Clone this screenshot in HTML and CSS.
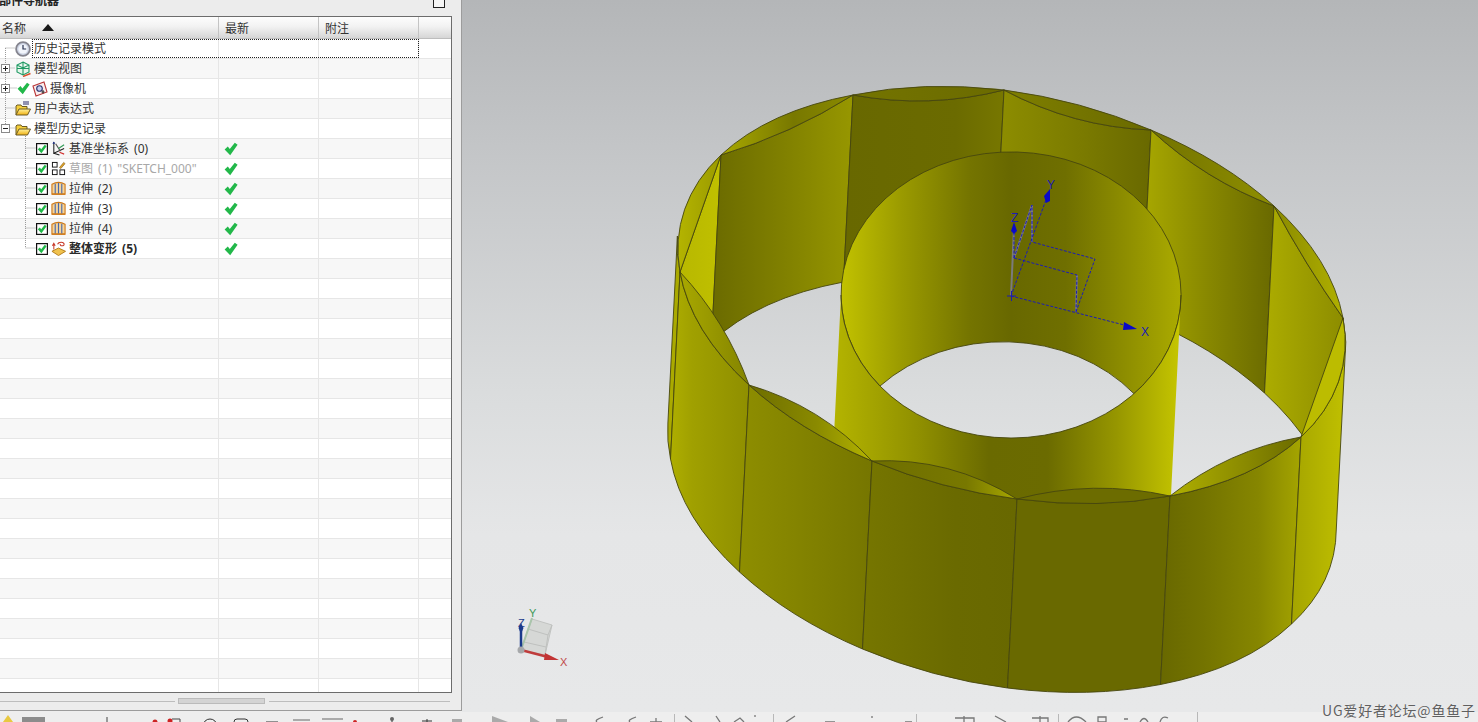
FILE: index.html
```html
<!DOCTYPE html>
<html lang="zh">
<head>
<meta charset="utf-8">
<title>部件导航器</title>
<link rel="stylesheet" href="styles.css">
</head>
<body>
<svg class="defs" width="0" height="0">
  <defs>
    <linearGradient id="fold" x1="0" y1="0" x2="0" y2="1"><stop offset="0" stop-color="#fff3a0"/><stop offset="1" stop-color="#f0b010"/></linearGradient>
    <symbol id="i-check" viewBox="0 0 14 14"><path d="M0.6 7.4 L3.8 4.4 L5.8 7 L10.8 0.8 L13.6 2.8 L6.2 13.2 Z" fill="#22b84a"/></symbol>
    <symbol id="i-box" viewBox="0 0 12 12"><rect x=".6" y=".6" width="10.8" height="10.8" fill="#fff" stroke="#111" stroke-width="1.2"/><path d="M1.8 6.2 L3.8 4.4 L5.2 6.2 L8.8 1.8 L10.6 3.2 L5.4 10.2 Z" fill="#22b84a"/></symbol>
    <symbol id="i-clock" viewBox="0 0 16 16"><circle cx="8" cy="8" r="6.9" fill="#cfd6e6" stroke="#85858f" stroke-width="1.8"/><circle cx="8" cy="8" r="4.6" fill="#f2f5fb"/><path d="M8 4 V8 H11.2" fill="none" stroke="#26304f" stroke-width="1.2"/></symbol>
    <symbol id="i-view" viewBox="0 0 16 16"><path d="M8 1 L14 4 V11 L8 14 L2 11 V4 Z M2 4 L8 7 L14 4 M8 1 V14 M2 7.5 L14 7.5" fill="#e6f6ec" stroke="#1f9a63" stroke-width="1.1"/><path d="M8 15.5 L15.5 12.5" stroke="#d8502c" stroke-width="1.5"/></symbol>
    <symbol id="i-cam" viewBox="0 0 16 16"><path d="M1 5 L12 1 L15 11 L4 15 Z" fill="#fbeeee" stroke="#b8373a" stroke-width="1.1"/><circle cx="7.5" cy="7.5" r="2.8" fill="#c8d0ee" stroke="#26306f" stroke-width="1.1"/><path d="M11 9 V12.5 M9.5 11 H12.5" stroke="#222" stroke-width="1"/></symbol>
    <symbol id="i-folder" viewBox="0 0 16 16"><path d="M1 14 V5 L2 4 H6 L7 5.5 H12 V8" fill="#f5cf3c" stroke="#6b5a24"/><path d="M1 14 L4 8 H15.5 L12.5 14 Z" fill="url(#fold)" stroke="#6b5a24"/></symbol>
    <symbol id="i-exp" viewBox="0 0 16 16"><path d="M1 14 V5 L2 4 H6 L7 5.5 H12 V8" fill="#f5cf3c" stroke="#6b5a24"/><path d="M1 14 L4 8 H15.5 L12.5 14 Z" fill="url(#fold)" stroke="#6b5a24"/><path d="M8 1 H14 M8 3 H14" stroke="#2a2a6a"/></symbol>
    <symbol id="i-datum" viewBox="0 0 16 16"><path d="M3 1 V13 L14 8 M3 13 L9 15" fill="none" stroke="#1d1d1d" stroke-width="1.1"/><path d="M5 3 L10 11" stroke="#555" stroke-width="1.2"/><path d="M8 8 L14 4" stroke="#2f9a54" stroke-width="1.1"/><path d="M9 12 L14 14" stroke="#d23030" stroke-width="1.2"/><path d="M1.5 3 L3 0.5 L4.5 3" fill="#1a2f8a"/></symbol>
    <symbol id="i-sketch" viewBox="0 0 16 16"><rect x="1.5" y="1.5" width="5" height="5" fill="#fff" stroke="#111"/><rect x="1.5" y="9.5" width="5" height="5" fill="#fff" stroke="#111"/><rect x="9.5" y="9.5" width="5" height="5" fill="#fff" stroke="#111"/><path d="M9 7 L13.5 1.5 L15 2.8 L10.5 8 Z" fill="#e0a428" stroke="#7a5410" stroke-width=".6"/></symbol>
    <symbol id="i-ext" viewBox="0 0 16 16"><path d="M1 3.5 Q8 -0.5 15 3.5 V14 H1 Z" fill="#f6d49a" stroke="#cf7a1a" stroke-width="1.2"/><path d="M4.5 3 V13.5 M8 2 V13.5 M11.5 3 V13.5" stroke="#4a68a8" stroke-width="1.2"/><path d="M1 14 H15" stroke="#cf7a1a" stroke-width="1.4"/></symbol>
    <symbol id="i-def" viewBox="0 0 16 16"><path d="M1 11 L8 7.5 L15.5 11 L8 15.5 Z" fill="#f0c24e" stroke="#b27a18"/><path d="M3 9 V3 M1.5 5 L3 2.5 L4.5 5" fill="none" stroke="#c83a2a" stroke-width="1.1"/><path d="M7 3.5 C8 0.5 14 0.5 14 3.5 C14 6 9 5.5 10 3.2" fill="none" stroke="#c83a2a" stroke-width="1.1"/></symbol>
  </defs>
</svg>

<main class="main">
  <section class="panel">
    <header class="panel-title">
      <span class="title-text">部件导航器</span>
      <span class="title-box"></span>
    </header>
    <div class="table">
      <div class="row head">
        <div class="cell name"><span class="head-name">名称</span><span class="sort"></span></div>
        <div class="cell col">最新</div>
        <div class="cell col">附注</div>
        <div class="cell rest"></div>
      </div>
      <div class="rows">
        <div class="row"><div class="cell name l0"><svg class="ic"><use href="#i-clock"/></svg><span>历史记录模式</span></div><div class="cell col"></div><div class="cell col"></div><div class="cell rest"></div></div>
        <div class="row"><div class="cell name l0"><svg class="ic"><use href="#i-view"/></svg><span>模型视图</span></div><div class="cell col"></div><div class="cell col"></div><div class="cell rest"></div></div>
        <div class="row"><div class="cell name lc"><svg class="tick"><use href="#i-check"/></svg><svg class="ic"><use href="#i-cam"/></svg><span>摄像机</span></div><div class="cell col"></div><div class="cell col"></div><div class="cell rest"></div></div>
        <div class="row"><div class="cell name l0"><svg class="ic"><use href="#i-exp"/></svg><span>用户表达式</span></div><div class="cell col"></div><div class="cell col"></div><div class="cell rest"></div></div>
        <div class="row"><div class="cell name l0"><svg class="ic"><use href="#i-folder"/></svg><span>模型历史记录</span></div><div class="cell col"></div><div class="cell col"></div><div class="cell rest"></div></div>
        <div class="row"><div class="cell name l1"><svg class="cb"><use href="#i-box"/></svg><svg class="ic15"><use href="#i-datum"/></svg><span>基准坐标系 (0)</span></div><div class="cell col"><svg class="ok"><use href="#i-check"/></svg></div><div class="cell col"></div><div class="cell rest"></div></div>
        <div class="row"><div class="cell name l1 dim"><svg class="cb"><use href="#i-box"/></svg><svg class="ic15"><use href="#i-sketch"/></svg><span>草图 (1) "SKETCH_000"</span></div><div class="cell col"><svg class="ok"><use href="#i-check"/></svg></div><div class="cell col"></div><div class="cell rest"></div></div>
        <div class="row"><div class="cell name l1"><svg class="cb"><use href="#i-box"/></svg><svg class="ic15"><use href="#i-ext"/></svg><span>拉伸 (2)</span></div><div class="cell col"><svg class="ok"><use href="#i-check"/></svg></div><div class="cell col"></div><div class="cell rest"></div></div>
        <div class="row"><div class="cell name l1"><svg class="cb"><use href="#i-box"/></svg><svg class="ic15"><use href="#i-ext"/></svg><span>拉伸 (3)</span></div><div class="cell col"><svg class="ok"><use href="#i-check"/></svg></div><div class="cell col"></div><div class="cell rest"></div></div>
        <div class="row"><div class="cell name l1"><svg class="cb"><use href="#i-box"/></svg><svg class="ic15"><use href="#i-ext"/></svg><span>拉伸 (4)</span></div><div class="cell col"><svg class="ok"><use href="#i-check"/></svg></div><div class="cell col"></div><div class="cell rest"></div></div>
        <div class="row"><div class="cell name l1 strong"><svg class="cb"><use href="#i-box"/></svg><svg class="ic15"><use href="#i-def"/></svg><span>整体变形 (5)</span></div><div class="cell col"><svg class="ok"><use href="#i-check"/></svg></div><div class="cell col"></div><div class="cell rest"></div></div>
        <div class="row"><div class="cell name"></div><div class="cell col"></div><div class="cell col"></div><div class="cell rest"></div></div>
        <div class="row"><div class="cell name"></div><div class="cell col"></div><div class="cell col"></div><div class="cell rest"></div></div>
        <div class="row"><div class="cell name"></div><div class="cell col"></div><div class="cell col"></div><div class="cell rest"></div></div>
        <div class="row"><div class="cell name"></div><div class="cell col"></div><div class="cell col"></div><div class="cell rest"></div></div>
        <div class="row"><div class="cell name"></div><div class="cell col"></div><div class="cell col"></div><div class="cell rest"></div></div>
        <div class="row"><div class="cell name"></div><div class="cell col"></div><div class="cell col"></div><div class="cell rest"></div></div>
        <div class="row"><div class="cell name"></div><div class="cell col"></div><div class="cell col"></div><div class="cell rest"></div></div>
        <div class="row"><div class="cell name"></div><div class="cell col"></div><div class="cell col"></div><div class="cell rest"></div></div>
        <div class="row"><div class="cell name"></div><div class="cell col"></div><div class="cell col"></div><div class="cell rest"></div></div>
        <div class="row"><div class="cell name"></div><div class="cell col"></div><div class="cell col"></div><div class="cell rest"></div></div>
        <div class="row"><div class="cell name"></div><div class="cell col"></div><div class="cell col"></div><div class="cell rest"></div></div>
        <div class="row"><div class="cell name"></div><div class="cell col"></div><div class="cell col"></div><div class="cell rest"></div></div>
        <div class="row"><div class="cell name"></div><div class="cell col"></div><div class="cell col"></div><div class="cell rest"></div></div>
        <div class="row"><div class="cell name"></div><div class="cell col"></div><div class="cell col"></div><div class="cell rest"></div></div>
        <div class="row"><div class="cell name"></div><div class="cell col"></div><div class="cell col"></div><div class="cell rest"></div></div>
        <div class="row"><div class="cell name"></div><div class="cell col"></div><div class="cell col"></div><div class="cell rest"></div></div>
        <div class="row"><div class="cell name"></div><div class="cell col"></div><div class="cell col"></div><div class="cell rest"></div></div>
        <div class="row"><div class="cell name"></div><div class="cell col"></div><div class="cell col"></div><div class="cell rest"></div></div>
        <div class="row"><div class="cell name"></div><div class="cell col"></div><div class="cell col"></div><div class="cell rest"></div></div>
        <div class="row"><div class="cell name"></div><div class="cell col"></div><div class="cell col"></div><div class="cell rest"></div></div>
        <div class="row"><div class="cell name"></div><div class="cell col"></div><div class="cell col"></div><div class="cell rest"></div></div>
        <div class="row"><div class="cell name"></div><div class="cell col"></div><div class="cell col"></div><div class="cell rest"></div></div>
      </div>
      <div class="focus"></div>
      <svg class="tree" viewBox="0 17 60 240" width="60" height="240">
        <g class="dots">
          <path d="M5.5 48 V64 M5.5 73 V84 M5.5 93 V124 M5.5 48 H15 M9.5 68 H15 M9.5 88 H17 M5.5 108 H15 M9.5 128 H15"/>
          <path d="M25.5 136 V248 M25.5 148 H36 M25.5 168 H36 M25.5 188 H36 M25.5 208 H36 M25.5 228 H36 M25.5 248 H36"/>
        </g>
        <g class="plus">
          <rect x="1.5" y="64.5" width="8" height="8"/><path d="M3 68.5 H8 M5.5 66 V71"/>
          <rect x="1.5" y="84.5" width="8" height="8"/><path d="M3 88.5 H8 M5.5 86 V91"/>
          <rect x="1.5" y="124.5" width="8" height="8"/><path d="M3 128.5 H8"/>
        </g>
      </svg>
    </div>
    <div class="hscroll"><span class="track t1"></span><span class="thumb"></span><span class="track t2"></span></div>
  </section>

  <section class="view">
    <svg class="scene" viewBox="462 0 1016 712" width="1016" height="712">
      <defs>
        <linearGradient id="gLA" gradientUnits="userSpaceOnUse" x1="713" y1="0" x2="853" y2="0"><stop offset="0" stop-color="#6b6b00"/><stop offset=".55" stop-color="#828200"/><stop offset="1" stop-color="#979700"/></linearGradient>
        <linearGradient id="gAB" gradientUnits="userSpaceOnUse" x1="845" y1="0" x2="1004" y2="0"><stop offset="0" stop-color="#686800"/><stop offset=".7" stop-color="#6b6b00"/><stop offset="1" stop-color="#777700"/></linearGradient>
        <linearGradient id="gBC" gradientUnits="userSpaceOnUse" x1="1004" y1="0" x2="1150" y2="0"><stop offset="0" stop-color="#8c8c00"/><stop offset=".55" stop-color="#7a7a00"/><stop offset="1" stop-color="#696900"/></linearGradient>
        <linearGradient id="gCD" gradientUnits="userSpaceOnUse" x1="1147" y1="0" x2="1272" y2="0"><stop offset="0" stop-color="#a6a600"/><stop offset=".5" stop-color="#878700"/><stop offset="1" stop-color="#6a6a00"/></linearGradient>
        <linearGradient id="gDE" gradientUnits="userSpaceOnUse" x1="1265" y1="0" x2="1343" y2="0"><stop offset="0" stop-color="#acac00"/><stop offset="1" stop-color="#8d8d00"/></linearGradient>
        <linearGradient id="gKLin" gradientUnits="userSpaceOnUse" x1="680" y1="0" x2="722" y2="0"><stop offset="0" stop-color="#b8b800"/><stop offset="1" stop-color="#c0c000"/></linearGradient>
        <linearGradient id="gFar" gradientUnits="userSpaceOnUse" x1="841" y1="0" x2="1181" y2="0"><stop offset="0" stop-color="#c2c200"/><stop offset=".18" stop-color="#9a9a00"/><stop offset=".38" stop-color="#747400"/><stop offset=".5" stop-color="#686800"/><stop offset=".66" stop-color="#6f6f00"/><stop offset=".85" stop-color="#909000"/><stop offset="1" stop-color="#abab00"/></linearGradient>
        <linearGradient id="gNear" gradientUnits="userSpaceOnUse" x1="834" y1="0" x2="1178" y2="0"><stop offset="0" stop-color="#b4b400"/><stop offset=".25" stop-color="#8f8f00"/><stop offset=".45" stop-color="#6a6a00"/><stop offset=".62" stop-color="#6b6b00"/><stop offset=".82" stop-color="#969600"/><stop offset="1" stop-color="#c4c400"/></linearGradient>
        <linearGradient id="gJK" gradientUnits="userSpaceOnUse" x1="668" y1="0" x2="749" y2="0"><stop offset="0" stop-color="#b0b000"/><stop offset=".3" stop-color="#a0a000"/><stop offset="1" stop-color="#8f8f00"/></linearGradient>
        <linearGradient id="gIJ" gradientUnits="userSpaceOnUse" x1="740" y1="0" x2="871" y2="0"><stop offset="0" stop-color="#8e8e00"/><stop offset="1" stop-color="#767600"/></linearGradient>
        <linearGradient id="gHI" gradientUnits="userSpaceOnUse" x1="863" y1="0" x2="1017" y2="0"><stop offset="0" stop-color="#767600"/><stop offset=".6" stop-color="#6a6a00"/><stop offset="1" stop-color="#686800"/></linearGradient>
        <linearGradient id="gFG" gradientUnits="userSpaceOnUse" x1="1160" y1="0" x2="1300" y2="0"><stop offset="0" stop-color="#686800"/><stop offset=".3" stop-color="#737300"/><stop offset=".7" stop-color="#868600"/><stop offset="1" stop-color="#a4a400"/></linearGradient>
        <linearGradient id="gEF" gradientUnits="userSpaceOnUse" x1="1291" y1="0" x2="1345" y2="0"><stop offset="0" stop-color="#a4a400"/><stop offset="1" stop-color="#c0c000"/></linearGradient>
        <linearGradient id="lLA" gradientUnits="userSpaceOnUse" x1="721" y1="0" x2="853" y2="0"><stop offset="0" stop-color="#a8a800"/><stop offset=".55" stop-color="#787800"/><stop offset="1" stop-color="#8a8a00"/></linearGradient>
        <linearGradient id="lAB" gradientUnits="userSpaceOnUse" x1="853" y1="0" x2="1004" y2="0"><stop offset="0" stop-color="#747400"/><stop offset="1" stop-color="#6b6b00"/></linearGradient>
        <linearGradient id="lBC" gradientUnits="userSpaceOnUse" x1="1004" y1="0" x2="1151" y2="0"><stop offset="0" stop-color="#7f7f00"/><stop offset="1" stop-color="#6a6a00"/></linearGradient>
        <linearGradient id="lCD" gradientUnits="userSpaceOnUse" x1="1151" y1="0" x2="1274" y2="0"><stop offset="0" stop-color="#727200"/><stop offset="1" stop-color="#8f8f00"/></linearGradient>
        <linearGradient id="lDE" gradientUnits="userSpaceOnUse" x1="1274" y1="0" x2="1343" y2="0"><stop offset="0" stop-color="#8a8a00"/><stop offset="1" stop-color="#b0b000"/></linearGradient>
        <linearGradient id="lKL" gradientUnits="userSpaceOnUse" x1="678" y1="0" x2="721" y2="0"><stop offset="0" stop-color="#b4b400"/><stop offset="1" stop-color="#9a9a00"/></linearGradient>
        <linearGradient id="lJK" gradientUnits="userSpaceOnUse" x1="680" y1="0" x2="749" y2="0"><stop offset="0" stop-color="#a8a800"/><stop offset="1" stop-color="#848400"/></linearGradient>
        <linearGradient id="lIJ" gradientUnits="userSpaceOnUse" x1="749" y1="0" x2="872" y2="0"><stop offset="0" stop-color="#6d6d00"/><stop offset=".55" stop-color="#8a8a00"/><stop offset="1" stop-color="#b4b400"/></linearGradient>
        <linearGradient id="lHI" gradientUnits="userSpaceOnUse" x1="872" y1="0" x2="1017" y2="0"><stop offset="0" stop-color="#6e6e00"/><stop offset=".65" stop-color="#787800"/><stop offset="1" stop-color="#a8a800"/></linearGradient>
        <linearGradient id="lFG" gradientUnits="userSpaceOnUse" x1="1170" y1="0" x2="1301" y2="0"><stop offset="0" stop-color="#b0b000"/><stop offset=".6" stop-color="#888800"/><stop offset="1" stop-color="#6a6a00"/></linearGradient>
      </defs>

      <!-- inner faces of the far wall -->
      <g class="edge">
        <path fill="url(#gKLin)" d="M680 272 L721 155 L711.5 342 L670.5 459 Z"/>
        <path fill="url(#gLA)" d="M721 155 Q791 134 853 95 L843.5 282 A340 201 12.5 0 0 711.5 342 Z"/>
        <path fill="url(#gAB)" d="M853 95 Q929 109 1004 90 L994.5 277 A340 201 12.5 0 0 843.5 282 Z"/>
        <path fill="url(#gBC)" d="M1004 90 Q1073 127 1151 130 L1141.5 317 A340 201 12.5 0 0 994.5 277 Z"/>
        <path fill="url(#gCD)" d="M1151 130 Q1205 180 1274 206 L1264.5 393 A340 201 12.5 0 0 1141.5 317 Z"/>
        <path fill="url(#gDE)" d="M1274 206 Q1305 264 1343 318 L1333.5 505 A340 201 12.5 0 0 1264.5 393 Z"/>
      </g>

      <!-- centre tube -->
      <g class="edge">
        <path fill="url(#gFar)" d="M880 386 A170 143 0 1 1 1134 393.7 A170 143 0 0 0 880 386 Z"/>
      </g>
      <path class="tube" fill="url(#gNear)" d="M841 295 A170 143 0 0 0 1181 295 L1170.5 505 L830.5 505 Z"/>
      <path class="tube-rim" d="M841 295 A170 143 0 0 0 1181 295"/>

      <!-- sketch and datum axes -->
      <g class="halo">
        <path d="M1011 296 L1014 228 M1032 205 L1032 242 M1077 275 L1076 312 M1014 258 L1032 205"/>
      </g>
      <g class="sk">
        <path d="M1011 296 L1132 327 M1011 296 L1047 197 M1014 258 V226"/>
        <path d="M1014 258 L1032 205 L1032 242 L1095 259 L1076 312 M1014 258 L1077 275 L1076 312"/>
        <path class="solid" d="M1007 296 H1016 M1011.5 291 V301"/>
      </g>
      <g class="arrow">
        <path d="M1124 322 L1137 329 L1123 330 Z"/>
        <path d="M1044 196 L1050 189 L1050 201 L1046 203 Z"/>
        <path d="M1014 222 L1017 231 L1014 234 L1011 231 Z"/>
      </g>
      <g class="axis-text">
        <text x="1141" y="336">X</text>
        <text x="1047" y="189">Y</text>
        <text x="1011" y="222">Z</text>
      </g>

      <!-- outer faces of the near wall -->
      <g class="edge">
        <path fill="#aaaa00" d="M677.4 236 A340 201 12.5 0 0 680 272 L670.5 459 A340 201 12.5 0 1 667.9 423 Z"/>
        <path fill="url(#gJK)" d="M749 385 A340 201 12.5 0 1 680 272 L670.5 459 A340 201 12.5 0 0 739.5 572 Z"/>
        <path fill="url(#gIJ)" d="M872 461 A340 201 12.5 0 1 749 385 L739.5 572 A340 201 12.5 0 0 862.5 649 Z"/>
        <path fill="url(#gHI)" d="M1017 499 A340 201 12.5 0 1 872 461 L862.5 649 A340 201 12.5 0 0 1007.5 688 Z"/>
        <path fill="#696900" d="M1170 496 A340 201 12.5 0 1 1017 499 L1007.5 688 A340 201 12.5 0 0 1160.5 684.5 Z"/>
        <path fill="url(#gFG)" d="M1301 437 A340 201 12.5 0 1 1170 496 L1160.5 684.5 A340 201 12.5 0 0 1291.5 624 Z"/>
        <path fill="url(#gEF)" d="M1343 318 A340 201 12.5 0 1 1301 437 L1291.5 624 A340 201 12.5 0 0 1336.3 529 L1345.8 342 Z"/>
      </g>

      <!-- top rim slivers: outer ellipse arc, then the scallop back -->
      <g class="edge">
        <path fill="url(#lKL)" d="M680 272 A340 201 12.5 0 1 721 155 Z"/>
        <path fill="url(#lLA)" d="M721 155 A340 201 12.5 0 1 853 95 Q791 134 721 155 Z"/>
        <path fill="url(#lAB)" d="M853 95 A340 201 12.5 0 1 1004 90 Q929 109 853 95 Z"/>
        <path fill="url(#lBC)" d="M1004 90 A340 201 12.5 0 1 1151 130 Q1073 127 1004 90 Z"/>
        <path fill="url(#lCD)" d="M1151 130 A340 201 12.5 0 1 1274 206 Q1205 180 1151 130 Z"/>
        <path fill="url(#lDE)" d="M1274 206 A340 201 12.5 0 1 1343 318 Q1305 264 1274 206 Z"/>
        <path fill="#bcbc00" d="M1343 318 A340 201 12.5 0 1 1301 437 Z"/>
        <path fill="url(#lFG)" d="M1301 437 A340 201 12.5 0 1 1170 496 Q1228 450 1301 437 Z"/>
        <path fill="#6c6c00" d="M1170 496 A340 201 12.5 0 1 1017 499 Q1093 479 1170 496 Z"/>
        <path fill="url(#lHI)" d="M1017 499 A340 201 12.5 0 1 872 461 Q950 457 1017 499 Z"/>
        <path fill="url(#lIJ)" d="M872 461 A340 201 12.5 0 1 749 385 Q821 406 872 461 Z"/>
        <path fill="url(#lJK)" d="M749 385 A340 201 12.5 0 1 680 272 Q726 321 749 385 Z"/>
      </g>

      <!-- small view triad -->
      <g class="triad">
        <path class="cube" d="M521 650 L532 619 L552 625 L545 655 Z"/>
        <path class="cube-line" d="M528 629 L548 635 M524 642 L546 647 M532 619 L528 629 L524 642 M552 625 L548 635 L545 655"/>
        <path class="ax-y" d="M521 650 L532 618"/>
        <path class="ax-z" d="M521 650 V630"/>
        <path class="ax-zh" d="M521 634 L518.5 628 L521 623 L523.5 628 Z"/>
        <path class="ax-x" d="M521 650 L548 657"/>
        <path class="ax-xh" d="M545 653 L559 660 L544 660 Z"/>
        <circle class="ball" cx="521" cy="650" r="3.5"/>
        <text class="t-y" x="529" y="617">Y</text>
        <text class="t-z" x="518" y="627">Z</text>
        <text class="t-x" x="560" y="666">X</text>
      </g>
    </svg>
  </section>
</main>

<footer class="toolbar">
  <svg class="tools" viewBox="0 712 1198 10" width="1198" height="10">
    <path d="M3 722 L8 715 L13 722 Z" fill="#e8c840"/>
    <rect x="22" y="717" width="23" height="5" fill="#8c8c8c"/>
    <path d="M107 717 V722" stroke="#444"/>
    <circle cx="155" cy="722" r="2.5" fill="#c22"/><circle cx="170" cy="721" r="2.5" fill="#c22"/><path d="M172 719 H180 V722" fill="none" stroke="#444"/>
    <g fill="none" stroke="#333">
      <circle cx="210" cy="726" r="7"/><rect x="234" y="719" width="14" height="8" rx="3"/><path d="M266 722 H278"/>
      <path d="M293 720 H310 M322 719 H343" stroke="#aaa" stroke-width="2"/>
      <path d="M392 719 V722 M427 719 V722 M422 721 H432"/>
    </g>
    <circle cx="355" cy="722" r="2" fill="#c22"/><circle cx="392" cy="719" r="2" fill="#666"/>
    <rect x="452" y="719" width="10" height="3" fill="#aaa"/>
    <g fill="#aaa">
      <path d="M492 716 L508 722 H492 Z"/><path d="M530 716 L540 722 H530 Z"/><rect x="556" y="719" width="11" height="3"/>
    </g>
    <g fill="none" stroke="#777" stroke-width="1.3">
      <path d="M603 717 Q594 720 597 722 M636 717 Q627 720 630 722 M650 722 H662 M656 718 V722"/>
      <path d="M685 716 L692 722 M716 716 L720 722 M734 722 L740 718 L744 722 M755 715 V717"/>
      <path d="M795 716 L786 722 M825 722 H835 M872 716 V718 M905 722 H912"/>
      <path d="M955 718 H974 V722 M964 716 V722 M995 716 L1006 722 M1032 718 H1048 V722 M1040 716 V722"/>
      <path d="M1068 722 Q1076 712 1086 722 M1098 717 H1106 V722 H1098 Z M1124 719 H1128 M1140 722 Q1144 715 1148 722 M1160 722 Q1162 715 1168 718"/>
    </g>
    <g stroke="#b8b8b8">
      <path d="M674.5 714 V722 M773.5 714 V722 M916.5 714 V722 M1058.5 714 V722 M1197.5 712 V722"/>
    </g>
  </svg>
</footer>
<div class="mark">UG爱好者论坛@鱼鱼子</div>
</body>
</html>
```

FILE: styles.css
```css
* { box-sizing: border-box; }
html, body { margin: 0; padding: 0; }
body {
  position: relative;
  width: 1478px;
  height: 722px;
  overflow: hidden;
  background: #eeeeee;
  color: #333;
  font-family: "Noto Sans", "Noto Sans CJK SC", sans-serif;
  font-size: 12px;
}
.defs { position: absolute; }

.main { display: flex; height: 712px; }

/* navigator panel */
.panel {
  width: 462px;
  height: 711px;
  flex: none;
  background: #ececec;
  border-right: 1px solid #9c9c9c;
  border-bottom: 1px solid #9c9c9c;
  overflow: hidden;
}
.panel-title {
  display: flex;
  justify-content: space-between;
  height: 16px;
  padding-right: 16px;
  overflow: hidden;
}
.title-text {
  margin: -8px 0 0 -1px;
  font-family: "Noto Sans CJK SC", sans-serif;
  font-weight: 700;
  font-size: 12px;
  line-height: 16px;
  color: #222;
}
.title-box {
  width: 12px;
  height: 16px;
  margin-top: -8px;
  border: 1px solid #222;
  background: #f6f6f6;
}

.table {
  position: relative;
  width: 452px;
  height: 677px;
  background: #fff;
  border-top: 1px solid #6c6c6c;
  border-right: 1px solid #6c6c6c;
  border-bottom: 1px solid #6c6c6c;
  overflow: hidden;
}
.row {
  display: grid;
  grid-template-columns: 219px 100px 100px 1fr;
  height: 20px;
  border-bottom: 1px solid #e6e6e6;
}
.rows .row:nth-child(even) { background: #f7f7f7; }
.head {
  height: 22px;
  background: linear-gradient(#fdfdfd, #f2f2f2 45%, #d6d6d6);
  border-bottom: 1px solid #bdbdbd;
}
.cell {
  display: flex;
  align-items: center;
  min-width: 0;
  border-right: 1px solid #e6e6e6;
  white-space: nowrap;
  line-height: 19px;
  word-spacing: 2px;
}
.head .cell { border-right-color: #c4c4c4; padding-top: 2px; }
.head .col { padding-left: 6px; }
.rest { border-right: 0; }
.head-name { padding-left: 2px; }
.sort {
  width: 0;
  height: 0;
  margin-left: 16px;
  margin-bottom: 3px;
  border-left: 6px solid transparent;
  border-right: 6px solid transparent;
  border-bottom: 7px solid #1a1a1a;
}

.l0 { padding-left: 15px; gap: 3px; }
.lc { padding-left: 17px; gap: 3px; }
.l1 { padding-left: 36px; gap: 3px; }
.ic { width: 16px; height: 16px; flex: none; }
.ic15 { width: 15px; height: 15px; flex: none; }
.tick { width: 13px; height: 13px; flex: none; margin-right: -1px; }
.cb { width: 12px; height: 12px; flex: none; }
.ok { width: 14px; height: 14px; margin-left: 5px; flex: none; }
.lc .ic + span { margin-left: -1px; }
.dim span { color: #a8a8a8; }
.strong span { font-weight: 700; color: #2a2a2a; }

.focus {
  position: absolute;
  left: 32px;
  top: 22px;
  width: 387px;
  height: 19px;
  border: 1px dotted #222;
}
.tree { position: absolute; left: 0; top: 0; pointer-events: none; }
.dots path { fill: none; stroke: #9a9a9a; stroke-dasharray: 1 1; }
.plus rect { fill: #fff; stroke: #8a8a8a; }
.plus path { fill: none; stroke: #222; }

.hscroll {
  display: flex;
  align-items: center;
  gap: 3px;
  width: 451px;
  height: 16px;
}
.track { height: 1px; background: #bdbdbd; }
.t1 { width: 175px; }
.t2 { width: 181px; margin-left: 1px; }
.thumb {
  width: 87px;
  height: 6px;
  background: #d4d4d4;
  border: 1px solid #bbbbbb;
}

/* 3D view */
.view {
  flex: 1;
  min-width: 0;
  background: linear-gradient(#b4b6b8, #c4c6c8 22%, #dadcdd 55%, #e5e6e7 75%, #e7e8e9);
}
.scene { display: block; }
.edge path {
  stroke: #46460f;
  stroke-width: .9;
  stroke-linejoin: round;
}
.tube-rim { fill: none; stroke: #46460f; stroke-width: .9; }
.halo path { fill: none; stroke: #7b7b7b; stroke-width: 2; }
.sk path { fill: none; stroke: #1c1cb4; stroke-width: 1; stroke-dasharray: 3 1.5; }
.sk .solid { stroke-dasharray: none; }
.arrow path { fill: #0a0ac8; }
.axis-text text {
  font-family: "Liberation Sans", sans-serif;
  font-size: 12px;
  fill: #1c1cb4;
}
.cube { fill: #d6d8d6; stroke: #c2c4c2; }
.cube-line { fill: none; stroke: #bfc1bf; }
.ax-y { stroke: #a9c5ab; stroke-width: 2; }
.ax-z { stroke: #1a3a8c; stroke-width: 2.5; }
.ax-zh { fill: #1a3a8c; }
.ax-x { stroke: #bf3c3c; stroke-width: 2.5; }
.ax-xh { fill: #c23434; }
.ball { fill: #a6a8aa; }
.triad text { font-family: "Liberation Sans", sans-serif; font-size: 11px; }
.t-y { fill: #3f9a58; }
.t-z { fill: #1a3a8c; }
.t-x { fill: #c04a4a; }

/* bottom toolbar, cut off by the window edge */
.toolbar { height: 10px; background: #eeeeee; overflow: hidden; }
.tools { display: block; }

.mark {
  position: absolute;
  left: 1322px;
  top: 701px;
  font-family: "Noto Sans CJK SC", sans-serif;
  font-size: 14px;
  line-height: 18px;
  letter-spacing: .8px;
  color: #606060;
  text-shadow: 0 0 1px #fff;
  white-space: nowrap;
}
```
